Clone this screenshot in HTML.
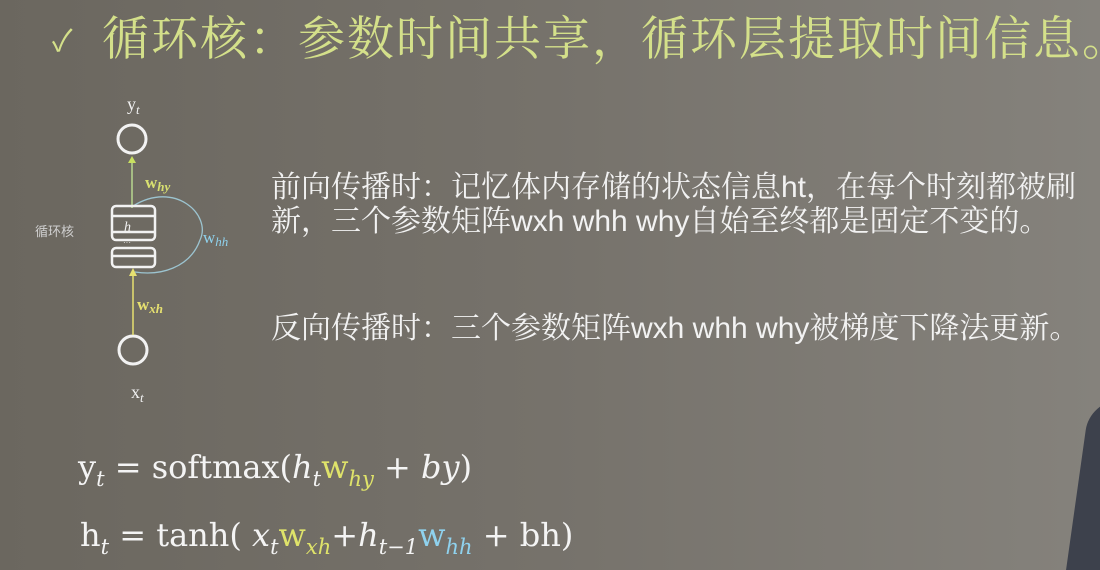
<!DOCTYPE html>
<html><head><meta charset="utf-8"><style>
html,body{margin:0;padding:0}
body{width:1100px;height:566px;overflow:hidden;position:relative;
background:linear-gradient(90deg,#6b675f 0%,#76726b 50%,#85827c 100%);
font-family:"Liberation Sans","Noto Sans CJK SC",sans-serif;}
.t{position:absolute;white-space:nowrap}
.title{left:102px;top:2px;font-size:47px;color:#d4e08a;font-family:"Liberation Serif","Noto Serif CJK SC",serif;letter-spacing:2px}
.chk{left:52px;top:16px;font-size:30px;color:#d4e08a}
.body{color:#f2f2f2;font-size:30px;font-family:"Liberation Sans","Noto Serif CJK SC",serif}
.f{font-family:"DejaVu Serif","Liberation Serif",serif;color:#f4f4f4;font-size:32px}
.y{color:#dfe36a}.b{color:#8fd2ee}
i{font-style:italic}
sub{font-size:21px;vertical-align:-8px}
</style></head><body>
<div class="t chk">✓</div>
<div class="t title">循环核：参数时间共享，循环层提取时间信息。</div>

<svg class="t" style="left:0;top:80px" width="280" height="330" viewBox="0 80 280 330">
<g fill="none" stroke="#f2f2f2" stroke-width="3">
<circle cx="132" cy="139" r="14"/>
<circle cx="133" cy="350" r="14"/>
</g>
<line x1="132" y1="160" x2="132" y2="208" stroke="#b8d890" stroke-width="1.5"/>
<polygon points="128,163 136,163 132,156" fill="#c8e060"/>
<line x1="133" y1="273" x2="133" y2="335" stroke="#e6e070" stroke-width="1.5"/>
<polygon points="129,276 137,276 133,268" fill="#e6e070"/>
<path d="M133 206 C175 180 212 215 200 240 C190 268 160 276 135 272" fill="none" stroke="#9cc4d0" stroke-width="1.3"/>
<g fill="none" stroke="#f2f2f2" stroke-width="2.5">
<rect x="112" y="206" width="43" height="34" rx="4"/>
<line x1="112" y1="216" x2="155" y2="216"/>
<line x1="112" y1="232" x2="155" y2="232"/>
<rect x="112" y="248" width="43" height="19" rx="4"/>
<line x1="112" y1="256" x2="155" y2="256"/>
</g>
<text x="124" y="231" font-family="Liberation Serif" font-style="italic" font-size="14" fill="#f2f2f2">h</text>
<text x="123" y="245" font-size="8" fill="#eee">···</text>
<text x="35" y="236" font-size="13" fill="#cfcfcf" font-family="Noto Sans CJK SC">循环核</text>
<text x="127" y="110" font-family="Liberation Serif" font-size="18" fill="#f2f2f2">y<tspan font-style="italic" font-size="13" dy="4">t</tspan></text>
<text x="131" y="398" font-family="Liberation Serif" font-size="18" fill="#f2f2f2">x<tspan font-style="italic" font-size="13" dy="4">t</tspan></text>
<text x="145" y="188" font-family="Liberation Serif" font-size="17" fill="#d8e070" font-weight="bold">w<tspan font-style="italic" font-size="13" dy="3">hy</tspan></text>
<text x="203" y="243" font-family="Liberation Serif" font-size="17" fill="#8fd2ee">w<tspan font-style="italic" font-size="13" dy="3">hh</tspan></text>
<text x="137" y="310" font-family="Liberation Serif" font-size="17" fill="#e6e070" font-weight="bold">w<tspan font-style="italic" font-size="13" dy="3">xh</tspan></text>
</svg>

<div class="t body" style="left:271px;top:162px">前向传播时：记忆体内存储的状态信息ht，在每个时刻都被刷</div>
<div class="t body" style="left:271px;top:196px">新，三个参数矩阵wxh whh why自始至终都是固定不变的。</div>
<div class="t body" style="left:271px;top:303px">反向传播时：三个参数矩阵wxh whh why被梯度下降法更新。</div>

<div class="t f" style="left:78px;top:448px">y<sub><i>t</i></sub> = softmax(<i>h<sub>t</sub></i><span class="y">w<sub><i>hy</i></sub></span> + <i>by</i>)</div>
<div class="t f" style="left:80px;top:516px">h<sub><i>t</i></sub> = tanh( <i>x<sub>t</sub></i><span class="y">w<sub><i>xh</i></sub></span>+<i>h<sub>t−1</sub></i><span class="b">w<sub><i>hh</i></sub></span> + bh)</div>

<div class="t" style="left:1078px;top:400px;width:40px;height:170px;background:#3d414c;border-radius:30px 0 0 0;transform:skewX(-8deg)"></div>
</body></html>
